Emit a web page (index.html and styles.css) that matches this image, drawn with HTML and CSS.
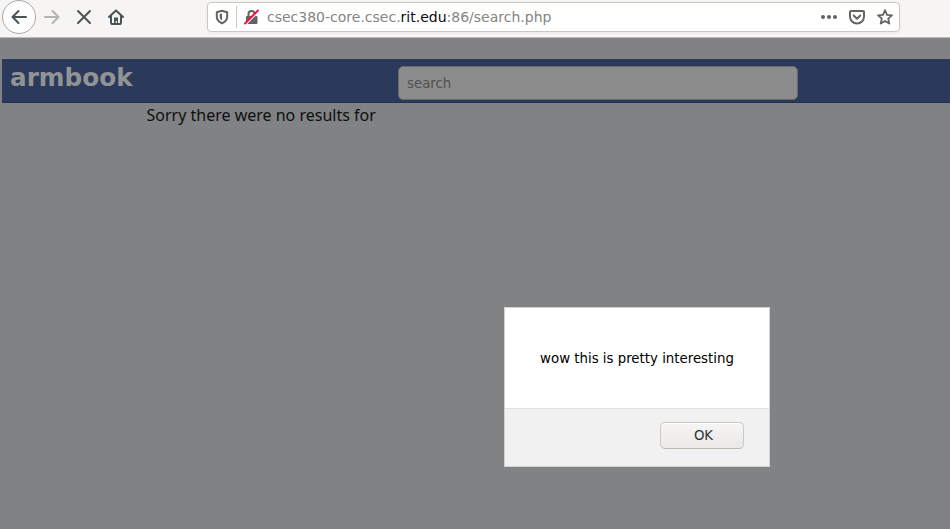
FILE: index.html
```html
<!DOCTYPE html>
<html lang="en">
<head>
<meta charset="utf-8">
<title>armbook</title>
<link rel="stylesheet" href="styles.css">
</head>
<body>
<header class="toolbar">
  <nav class="nav">
    <button class="nav-button back" aria-label="Back"><svg width="16" height="16" viewBox="0 0 16 16"><path d="M15 8H2M7.500 2L1.500 8l6 6"/></svg></button>
    <button class="nav-button forward" aria-label="Forward"><svg width="16" height="16" viewBox="0 0 16 16"><path d="M1 8h13M8.500 2l6 6-6 6"/></svg></button>
    <button class="nav-button" aria-label="Stop"><svg width="16" height="16" viewBox="0 0 16 16"><path d="M2 2l12 12M14 2L2 14"/></svg></button>
    <button class="nav-button" aria-label="Home"><svg width="16" height="16" viewBox="0 0 16 16"><path d="M1 8l7-6.500L15 8M3 7.500V14q0 1 1 1h8q1 0 1-1V7.500"/><path class="solid" d="M6 8.500h4V15H8.900v-3H7.700v3H6z"/></svg></button>
  </nav>
  <div class="address">
    <svg class="shield" width="16" height="16" viewBox="0 0 16 16"><path d="M8 1.800l5.200 1.400v4.300c0 3.200-2 5.500-5.200 6.900-3.200-1.400-5.200-3.700-5.200-6.900V3.200z"/><path class="solid" d="M8 4.500v7.300C6.300 10.600 5.700 9 5.700 7V5z"/></svg>
    <span class="separator"></span>
    <svg class="lock" width="16" height="16" viewBox="0 0 16 16"><path d="M5.500 7V5a3 3 0 0 1 6 0v2"/><rect class="solid" x="3" y="7" width="11.500" height="8" rx="1"/><path class="gap" d="M1.800 16L15.800 2"/><path class="slash" d="M2 14.500L15 1.500"/></svg>
    <span class="url">csec380-core.csec.<b>rit.edu</b>:86/search.php</span>
    <span class="actions">
      <svg width="16" height="16" viewBox="0 0 16 16"><g class="solid"><circle cx="2" cy="8" r="2"/><circle cx="8" cy="8" r="2"/><circle cx="14" cy="8" r="2"/></g></svg>
      <svg width="16" height="16" viewBox="0 0 16 16"><path d="M2 2h12q1 0 1 1v4.500a7 7 0 0 1-14 0V3q0-1 1-1zM4.700 6.500L8 9.700l3.300-3.200"/></svg>
      <svg class="star" width="16" height="16" viewBox="0 0 16 16"><path d="M8 1.200l2 4.600 5 .5-3.800 3.300 1.100 5L8 12l-4.300 2.600 1.100-5L1 6.300l5-.5z"/></svg>
    </span>
  </div>
</header>
<main class="page">
  <div class="banner">
    <h1 class="brand">armbook</h1>
    <input class="search" type="text" placeholder="search" aria-label="search">
  </div>
  <p class="message">Sorry there were no results for</p>
</main>
<section class="dialog" role="alertdialog">
  <div class="dialog-text">wow this is pretty interesting</div>
  <footer class="dialog-footer"><button class="ok">OK</button></footer>
</section>
</body>
</html>
```
FILE: styles.css
```css
* { box-sizing: border-box; }
body {
  margin: 0;
  height: 529px;
  overflow: hidden;
  display: flex;
  flex-direction: column;
  background: #818283;
  font-family: "DejaVu Sans", sans-serif;
}
svg {
  display: block;
  flex: none;
  fill: none;
  stroke: currentColor;
  stroke-width: 2;
  stroke-linecap: round;
  stroke-linejoin: round;
}
.solid { fill: currentColor; stroke: none; }
.toolbar {
  flex: none;
  height: 38px;
  display: flex;
  align-items: flex-start;
  background: #f6f5f4;
  border-bottom: 1px solid #c0bcb5;
}
.nav { display: flex; width: 207px; padding-left: 2px; }
.nav-button {
  display: grid;
  place-items: center;
  width: 32px;
  height: 34px;
  padding: 0;
  border: 0;
  background: none;
  color: #4c5356;
}
.back { width: 34px; border: 1px solid #aaa8a6; border-radius: 50%; background: #fdfdfd; }
.forward { color: #b3b4b3; }
.address {
  display: flex;
  align-items: center;
  width: 693px;
  height: 30px;
  margin-top: 2px;
  padding: 0 6px;
  border: 1px solid #cdc7c2;
  border-radius: 4px;
  background: #fff;
  box-shadow: 0 1px 3px rgba(0, 0, 0, .06);
  color: #636363;
}
.separator { width: 1px; height: 22px; margin: 0 6px; background: #cdc7c2; }
.lock .gap { stroke: #fff; }
.lock .slash { stroke: #f5104a; }
.star { stroke-width: 1.800; }
.url { margin-left: 8px; font-size: 14px; line-height: 20px; color: #858585; white-space: nowrap; }
.url b { font-weight: 400; color: #0c0c0c; }
.actions { display: flex; gap: 12px; margin-left: auto; }
.page { flex: 1; padding: 21px 0 0 2px; }
.banner {
  display: flex;
  height: 44px;
  padding: 7px 0 0 8px;
  background: #2b3a5b;
  border-bottom: 1px solid #20304f;
}
.brand { width: 388px; margin: -3px 0 0; font-size: 24.7px; line-height: 30px; color: #919395; }
.search {
  width: 400px;
  height: 34px;
  padding: 0 8px;
  border: 1px solid #6b6966;
  border-radius: 5px;
  background: #8c8c8c;
  font: 13.333px "DejaVu Sans", sans-serif;
}
.search::placeholder { color: #505050; opacity: 1; }
.message { margin: 1px 0 0 144.500px; font: 16px/23px "Noto Sans", sans-serif; color: #0e0f10; }
.dialog {
  position: absolute;
  left: 504px;
  top: 307px;
  width: 266px;
  height: 160px;
  display: flex;
  flex-direction: column;
  border: 1px solid #d2d2d2;
  background: #fff;
}
.dialog-text {
  flex: 1;
  display: grid;
  place-items: center;
  font-size: 13.333px;
  white-space: nowrap;
  color: #000;
}
.dialog-footer {
  height: 58px;
  padding: 13px 25px;
  display: flex;
  justify-content: flex-end;
  border-top: 1px solid #e0e0e0;
  background: #f1f1f1;
}
.ok {
  width: 84px;
  height: 27px;
  padding: 0 0 0 3px;
  border: 1px solid #cdc7c2;
  border-bottom-color: #bfb8b1;
  border-radius: 5px;
  background: linear-gradient(#f6f5f4, #ebe9e7);
  box-shadow: inset 0 1px #fff;
  font: 13.333px "DejaVu Sans", sans-serif;
  color: #2e3436;
}
```
